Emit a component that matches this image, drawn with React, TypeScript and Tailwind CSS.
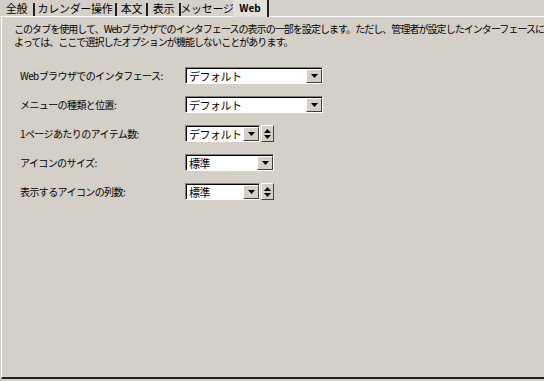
import React from 'react';

const font = '"Noto Sans CJK JP", "MS UI Gothic", sans-serif';

function Arrow() {
  return (
    <svg width="7" height="4" viewBox="0 0 7 4" className="block">
      <path d="M0 0h7L3.5 4z" fill="#000" />
    </svg>
  );
}

function DropButton() {
  return (
    <div className="w-[16px] h-full bg-[#d4d0c8] border border-t-white border-l-white border-r-[#404040] border-b-[#404040] flex items-center justify-center">
      <Arrow />
    </div>
  );
}

function Spinner() {
  return (
    <div className="ml-[1px] w-[13px] h-[17px] bg-[#d4d0c8] border border-t-white border-l-white border-r-[#404040] border-b-[#404040] flex flex-col items-center justify-center gap-[2px]">
      <svg width="7" height="4" viewBox="0 0 7 4" className="block">
        <path d="M3.5 0L7 4H0z" fill="#000" />
      </svg>
      <svg width="7" height="4" viewBox="0 0 7 4" className="block">
        <path d="M0 0h7L3.5 4z" fill="#000" />
      </svg>
    </div>
  );
}

function Select({ value, width, spin }: { value: string; width: number; spin?: boolean }) {
  return (
    <div className="flex items-center">
      <div
        className="h-[17px] bg-white border border-t-[#808080] border-l-[#808080] border-r-white border-b-white flex"
        style={{ width }}
      >
        <div className="flex-1 border-t border-l border-t-black border-l-black flex items-center pl-[2px] text-[11px] leading-none tracking-[-0.5px] text-black whitespace-nowrap">
          {value}
        </div>
        <div className="border-t border-t-black h-full">
          <DropButton />
        </div>
      </div>
      {spin && <Spinner />}
    </div>
  );
}

const tabs = [
  { label: '全般', w: 33 },
  { label: 'カレンダー操作', w: 80 },
  { label: '本文', w: 29 },
  { label: '表示', w: 31 },
  { label: 'メッセージ', w: 52 },
];

const rows = [
  { label: 'Webブラウザでのインタフェース:', value: 'デフォルト', width: 138, spin: false },
  { label: 'メニューの種類と位置:', value: 'デフォルト', width: 138, spin: false },
  { label: '1ページあたりのアイテム数:', value: 'デフォルト', width: 75, spin: true },
  { label: 'アイコンのサイズ:', value: '標準', width: 89, spin: false },
  { label: '表示するアイコンの列数:', value: '標準', width: 75, spin: true },
];

export default function App() {
  return (
    <div className="w-[544px] h-[381px] bg-[#d4d0c8] flex flex-col overflow-hidden text-black" style={{ fontFamily: font }}>
      {/* Tabs */}
      <div className="h-[17px] flex items-stretch shrink-0">
        {tabs.map((t, i) => (
          <React.Fragment key={t.label}>
            <div
              className="flex items-center justify-center text-[11px] leading-none tracking-[-0.3px] whitespace-nowrap border-b border-b-white pt-[1px]"
              style={{ width: t.w }}
            >
              {t.label}
            </div>
            {i < tabs.length - 1 && (
              <div className="w-[2px] flex flex-col border-b border-b-white">
                <div className="mt-[3px] flex-1 bg-[#202020]" />
              </div>
            )}
          </React.Fragment>
        ))}
        <div className="w-[34px] bg-[#e2dfd8] flex items-center justify-center pb-[2px] text-[10px] font-bold leading-[12px]">
          Web
        </div>
        <div className="w-[2px] bg-[#202020]" />
        <div className="flex-1 border-b border-b-white" />
      </div>

      {/* Panel */}
      <div className="flex-1 flex flex-col ml-[1px] border-l border-l-white border-b-2 border-b-[#202020] mb-[2px]">
        <div className="pl-[12px] pt-[5px] text-[10px] leading-[13px] tracking-[-0.95px] whitespace-nowrap">
          このタブを使用して、Webブラウザでのインタフェースの表示の一部を設定します。ただし、管理者が設定したインターフェースに
          <br />
          よっては、ここで選択したオプションが機能しないことがあります。
        </div>
        <div className="flex flex-col gap-[12px] pl-[18px] pt-[19px]">
          {rows.map((r) => (
            <div key={r.label} className="flex items-center h-[17px]">
              <div className="w-[165px] text-[10px] leading-none tracking-[-0.6px] whitespace-nowrap">{r.label}</div>
              <Select value={r.value} width={r.width} spin={r.spin} />
            </div>
          ))}
        </div>
      </div>
    </div>
  );
}
